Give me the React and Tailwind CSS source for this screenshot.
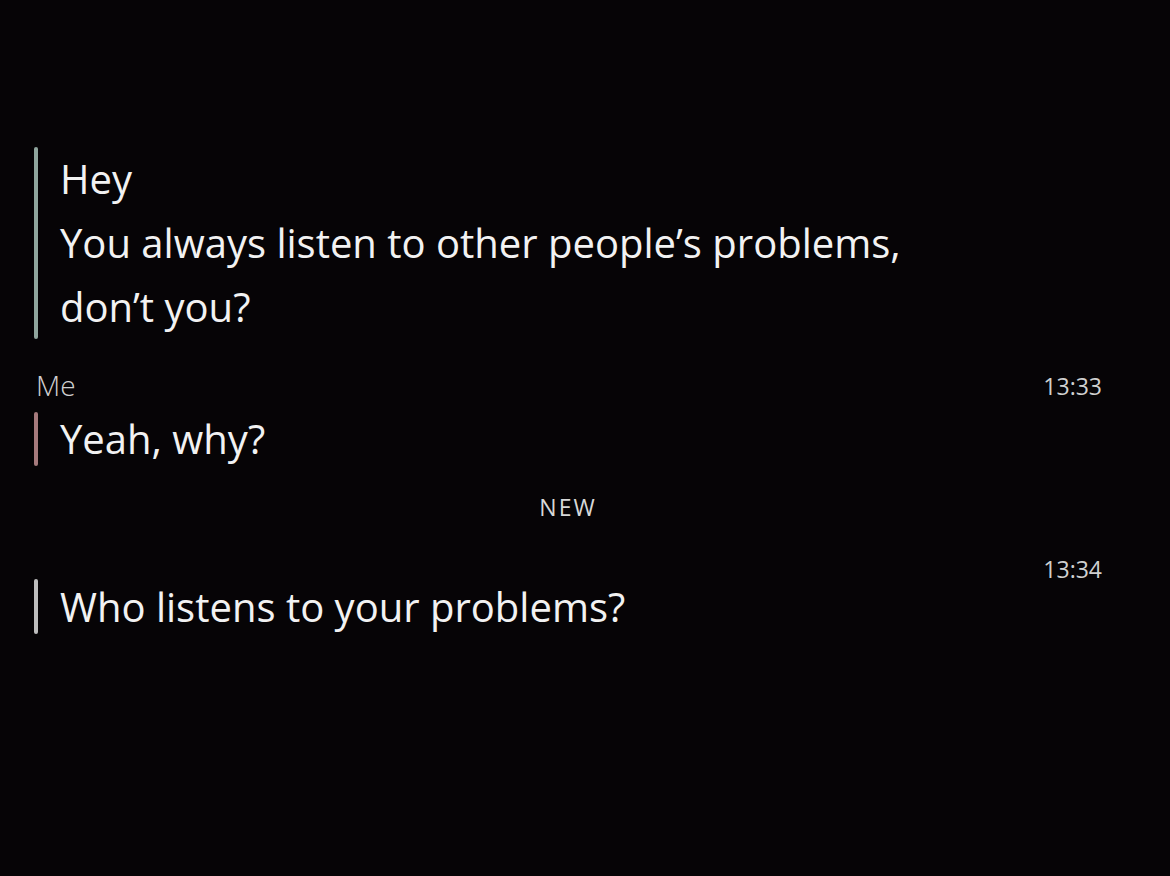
import React from "react";

const font = { fontFamily: "'Open Sans', Lato, sans-serif" };

function Message({ bar, lines, className = "" }) {
  return (
    <div className={"flex " + className}>
      <div className={"w-[4px] rounded-full shrink-0 self-stretch " + bar} />
      <div className="pl-[22px] text-[#f2f2f2] text-[40px] leading-[64px]">
        {lines.map((line, i) => (
          <p key={i}>{line}</p>
        ))}
      </div>
    </div>
  );
}

export default function App() {
  return (
    <div className="w-[1170px] h-[876px] bg-[#060406] pl-[34px] pr-[68px] pt-[147px]" style={font}>
      <Message
        bar="bg-[#8fa59d]"
        lines={["Hey", "You always listen to other people\u2019s problems,", "don\u2019t you?"]}
      />

      <div className="flex justify-between items-center mt-[30px] text-[#d0d0d0] leading-[28px]">
        <span className="pl-[2px] text-[28px] font-light">Me</span>
        <span className="text-[23px] pt-[3px]">13:33</span>
      </div>
      <Message bar="bg-[#a57a7c]" lines={["Yeah, why?"]} className="mt-[12px] h-[54px] items-center" />

      <div className="flex justify-center mt-[27px] text-[#d8d8d8] text-[23px] leading-[28px] tracking-[2px]">NEW</div>

      <div className="flex justify-end mt-[36px] text-[#d0d0d0] text-[23px] leading-[24px]">13:34</div>
      <Message bar="bg-[#bdbdbd]" lines={["Who listens to your problems?"]} className="mt-[-2px] h-[55px] items-center" />
    </div>
  );
}
